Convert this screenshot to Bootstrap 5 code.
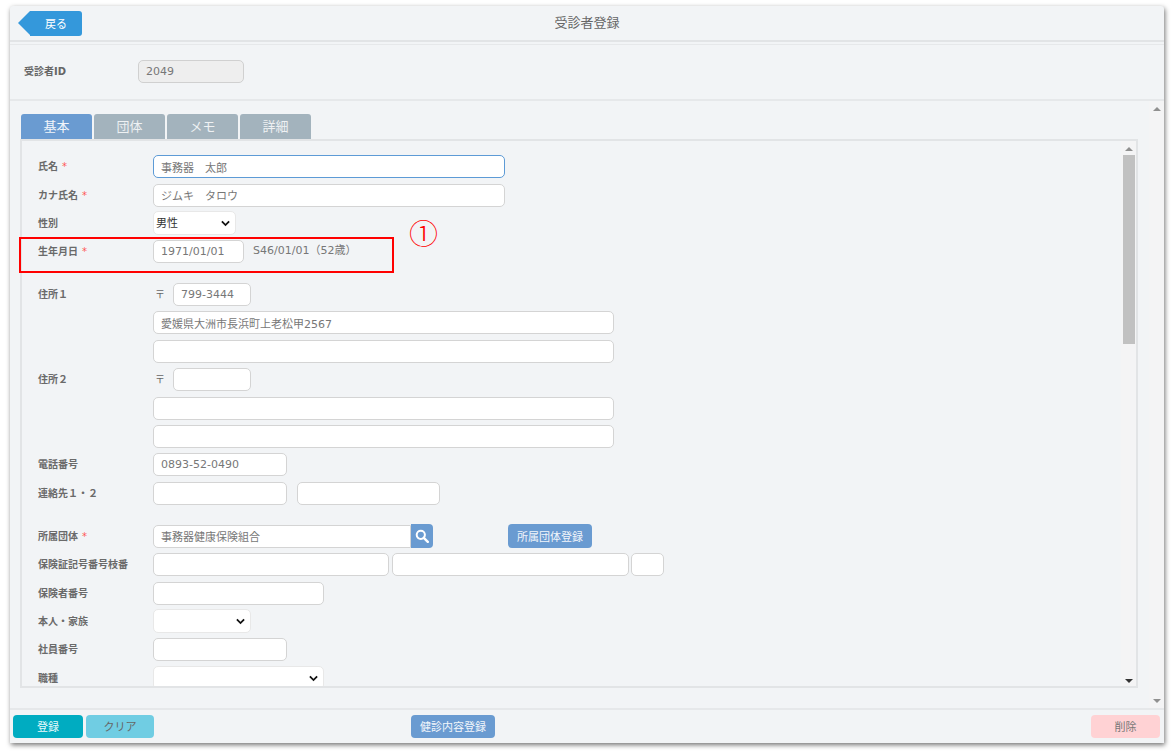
<!DOCTYPE html>
<html lang="ja"><head><meta charset="utf-8"><title>受診者登録</title>
<link href="https://cdn.jsdelivr.net/npm/bootstrap@5.3.0/dist/css/bootstrap.min.css" rel="stylesheet">
<style>
html,body{height:756px;overflow:hidden;background:#fff}
body{font-family:"DejaVu Sans","Noto Sans CJK JP",sans-serif;color:#666;font-size:11px;position:relative}
.win{margin:6px 0 0 10px;width:1154px;height:737px;background:#f2f4f6;box-shadow:1px 2px 5px rgba(0,0,0,.55);border-radius:3px 3px 0 0}
.topbar{height:36px;border-bottom:2px solid #e2e4e6;position:relative;padding:5px 0 0 20px;flex:none}
.backbtn{display:block;width:52px;height:25px;background:#3498db;color:#fff;border:0;border-radius:0 3px 3px 0;font-size:11px;padding:0;position:relative}
.backbtn::before{content:"";position:absolute;left:-12px;top:0;border-style:solid;border-width:12.5px 12px 12.5px 0;border-color:transparent #3498db transparent transparent}
.backbtn,.pbtn,.fb,.ttl{font-family:"Noto Sans CJK JP",sans-serif}
.ttl{position:absolute;left:0;right:0;top:6px;text-align:center;font-size:13px;color:#666}
.idbar{margin-top:2px;height:57px;flex:none;border-top:1px solid #e6e8ea;border-bottom:2px solid #e6e8ea;padding:14px 0 0 14px;display:flex;align-items:flex-start}
.idbar .lbl{width:114px;line-height:25px;font-weight:700;font-size:10px}
.ctl{height:23px;border:1px solid #d4d4d4;border-radius:5px;background:#fff;font-size:11px;color:#777;padding:0 7px;box-shadow:none;min-height:0;line-height:1.5;font-family:inherit}
.ctl:focus{outline:0;box-shadow:none}
.ro{background:#eee;border-color:#d0d0d0;width:106px;margin-top:1px}
.midpane{height:607px;overflow:hidden;flex:none}
.mainc{padding:13px 11px 0 10px;min-width:0}
.outsb,.insb{display:flex;flex-direction:column;justify-content:space-between;align-items:center;flex:none;background:#f4f4f5}
.outsb{width:15px;padding:6px 0 5px}
.insb{width:15px;padding:0 0 3px;margin:0 0 0 auto}
.insb i{display:block;width:12px;height:189px;background:#c1c1c1;margin-top:4px}
.tri{width:0;height:0;border-left:4px solid transparent;border-right:4px solid transparent;border-bottom:4px solid #909090;display:block}
.tri.dn{border-bottom:0;border-top:4px solid #909090}
.insb .tri{border-bottom-color:#909090;margin-top:6px}
.insb .tri.dn{border-top-color:#333;margin:0}
.tabsrow{height:25px;display:flex;gap:2px;padding-left:1px;margin:0;list-style:none;border:0}
.tabsrow .nav-link{width:71px;height:25px;padding:0;border:0;border-radius:3px 3px 0 0;background:#a3b3bd;color:#eef1f3;text-align:center;font-size:13px;line-height:25px}
.tabsrow .nav-link.active{background:#6a9bd1;color:#f1f5fa;border:0}
.panelbox{height:549px;border:2px solid #e2e4e6;display:flex;overflow:hidden}
.formarea{width:1098px;padding:11.5px 0 0 16px;flex:none}
.frow{height:28.35px;display:flex;align-items:center}
.frow .lbl{width:115px;flex:none;font-weight:700;color:#6a6a6a;font-size:10px}
.req{color:#f55;margin-left:4px;font-weight:400}
.w352{width:352px}.w91{width:91px}.w461{width:461px}.w134{width:134px}.w143{width:143px}.w171{width:171px}.w78{width:78px}
.w236{width:236px}.w237{width:237px}.w33{width:33px}.w258{width:258px}
.sel{height:24px;border:1px solid #e8e8e8;border-radius:5px;background-color:#fff;font-size:11px;color:#333;padding:1px 0 0 2px;background-image:url("data:image/svg+xml,%3Csvg xmlns='http://www.w3.org/2000/svg' viewBox='0 0 10 7'%3E%3Cpath d='M1 1.2l4 4 4-4' fill='none' stroke='%23111' stroke-width='2'/%3E%3C/svg%3E");background-size:9px 7px;background-position:right 5px center;min-height:0;box-shadow:none;font-family:inherit}
.w83{width:83px}.w98{width:98px}
.focusd{border-color:#5d9bd6}
.zip{width:20px;font-size:10px;padding-left:2px;flex:none}
.gapr{margin-left:10px}
.gap3{margin-left:3px}.gap2{margin-left:2px}
.mt15{margin-top:14.6px}.mt16{margin-top:15px}
.srch{width:22px;height:24px;background:#6a9bd1;border:0;border-radius:0 4px 4px 0;padding:0;display:flex;align-items:center;justify-content:center}
.pbtn{background:#6a9bd1;color:#f2f6fb;border:0;border-radius:4px;height:24px;font-size:11px;padding:0;width:84px;margin-left:75px}
.agegap{margin-left:9px;font-size:11px;color:#777}
.foot{height:32px;flex:none;border-top:2px solid #e6e8ea;padding:5px 4px 0 3px;display:flex;align-items:flex-start}
.fb{height:23px;width:70px;border:0;border-radius:4px;padding:0;font-size:11px}
.b-ok{background:#00acc1;color:#e8fafc}
.b-clr{background:#70cde3;color:#666;width:68px;margin-left:3px}
.b-kn{background:#6a9bd1;color:#f2f6fb;width:84px;margin-left:257px}
.b-del{background:#ffd2d4;color:#777;width:69px;margin-left:auto}
.redbox{position:absolute;left:19px;top:237px;width:375px;height:36px;border:2px solid #f00;pointer-events:none}
.circ{position:absolute;left:409px;top:213px;font-size:29px;line-height:38px;color:#f00;font-family:"Noto Sans CJK JP",sans-serif;font-weight:300}
</style></head><body>
<div class="win d-flex flex-column">
  <div class="topbar"><button class="backbtn btn" type="button">戻る</button><div class="ttl">受診者登録</div></div>
  <div class="idbar"><div class="lbl">受診者ID</div><input class="form-control ctl ro" value="2049" readonly></div>
  <div class="midpane d-flex">
    <div class="mainc flex-grow-1">
      <ul class="nav tabsrow">
        <li class="nav-item"><a class="nav-link active" href="#">基本</a></li>
        <li class="nav-item"><a class="nav-link" href="#">団体</a></li>
        <li class="nav-item"><a class="nav-link" href="#">メモ</a></li>
        <li class="nav-item"><a class="nav-link" href="#">詳細</a></li>
      </ul>
      <div class="panelbox">
        <div class="formarea">
          <div class="frow"><div class="lbl">氏名<span class="req">*</span></div><input class="form-control ctl w352 focusd" value="事務器　太郎"></div>
          <div class="frow"><div class="lbl">カナ氏名<span class="req">*</span></div><input class="form-control ctl w352" value="ジムキ　タロウ"></div>
          <div class="frow"><div class="lbl">性別</div><select class="form-select sel w83"><option>男性</option></select></div>
          <div class="frow"><div class="lbl">生年月日<span class="req">*</span></div><input class="form-control ctl w91" value="1971/01/01"><span class="agegap">S46/01/01（52歳）</span></div>
          <div class="frow mt15"><div class="lbl">住所１</div><span class="zip">〒</span><input class="form-control ctl w78" value="799-3444"></div>
          <div class="frow"><div class="lbl"></div><input class="form-control ctl w461" value="愛媛県大洲市長浜町上老松甲2567"></div>
          <div class="frow"><div class="lbl"></div><input class="form-control ctl w461"></div>
          <div class="frow"><div class="lbl">住所２</div><span class="zip">〒</span><input class="form-control ctl w78"></div>
          <div class="frow"><div class="lbl"></div><input class="form-control ctl w461"></div>
          <div class="frow"><div class="lbl"></div><input class="form-control ctl w461"></div>
          <div class="frow"><div class="lbl">電話番号</div><input class="form-control ctl w134" value="0893-52-0490"></div>
          <div class="frow"><div class="lbl">連絡先１・２</div><input class="form-control ctl w134"><input class="form-control ctl w143 gapr"></div>
          <div class="frow mt16"><div class="lbl">所属団体<span class="req">*</span></div><input class="form-control ctl w258 rounded-end-0" value="事務器健康保険組合"><button class="srch" type="button" aria-label="検索"><svg width="14" height="14" viewBox="0 0 14 14"><circle cx="5.8" cy="5.8" r="4.1" fill="none" stroke="#fff" stroke-width="2"/><path d="M8.8 8.8l4 4" stroke="#fff" stroke-width="2.4" stroke-linecap="round"/></svg></button><button class="pbtn btn" type="button">所属団体登録</button></div>
          <div class="frow"><div class="lbl">保険証記号番号枝番</div><input class="form-control ctl w236"><input class="form-control ctl w237 gap3"><input class="form-control ctl w33 gap2"></div>
          <div class="frow"><div class="lbl">保険者番号</div><input class="form-control ctl w171"></div>
          <div class="frow"><div class="lbl">本人・家族</div><select class="form-select sel w98"><option></option></select></div>
          <div class="frow"><div class="lbl">社員番号</div><input class="form-control ctl w134"></div>
          <div class="frow"><div class="lbl">職種</div><select class="form-select sel w171"><option></option></select></div>
        </div>
        <div class="insb"><span class="d-flex flex-column align-items-center"><b class="tri"></b><i></i></span><b class="tri dn"></b></div>
      </div>
    </div>
    <div class="outsb"><b class="tri"></b><b class="tri dn"></b></div>
  </div>
  <div class="foot">
    <button class="fb b-ok btn" type="button">登録</button>
    <button class="fb b-clr btn" type="button">クリア</button>
    <button class="fb b-kn btn" type="button">健診内容登録</button>
    <button class="fb b-del btn" type="button">削除</button>
  </div>
</div>
<div class="redbox"></div>
<div class="circ">①</div>
</body></html>
